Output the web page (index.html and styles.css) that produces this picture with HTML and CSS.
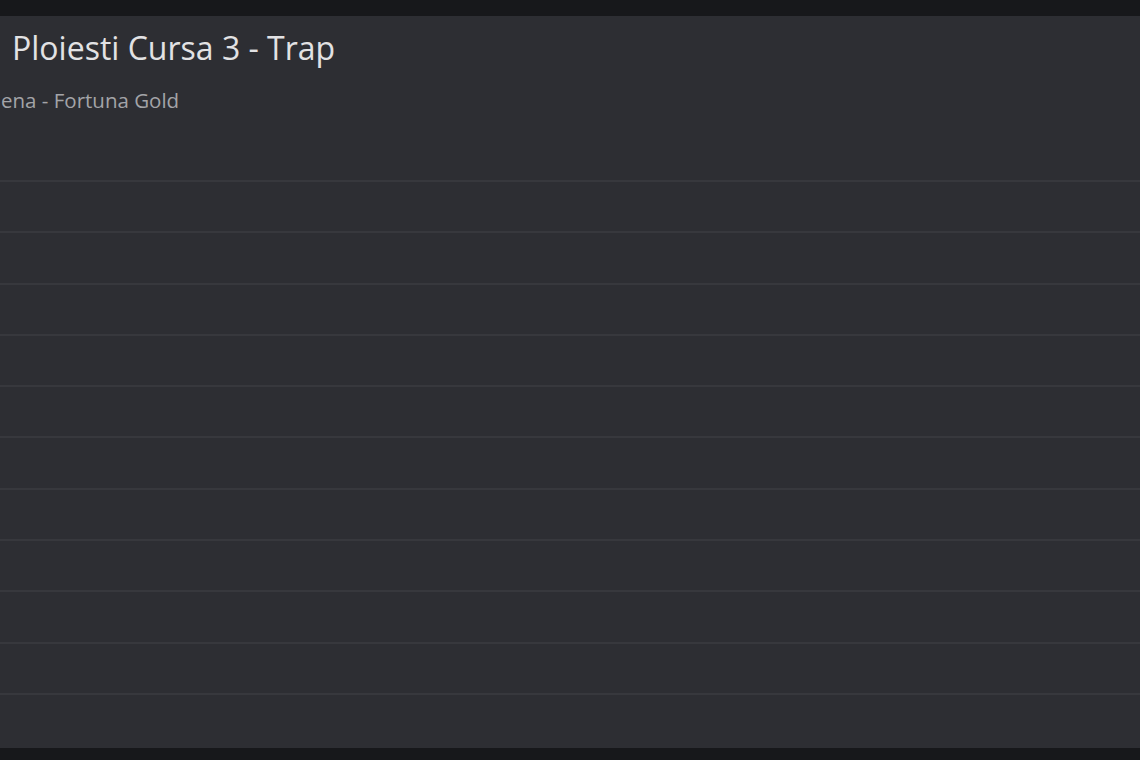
FILE: index.html
```html
<!DOCTYPE html>
<html>
<head>
<meta charset="utf-8">
<link rel="stylesheet" href="styles.css">
</head>
<body>
<div class="topbar"></div>
<main class="panel">
  <header class="head">
    <h1 class="title">Ploiesti Cursa 3 - Trap</h1>
    <p class="sub">ena - Fortuna Gold</p>
  </header>
  <div class="rows">
    <div class="row"></div>
    <div class="row"></div>
    <div class="row"></div>
    <div class="row"></div>
    <div class="row"></div>
    <div class="row"></div>
    <div class="row"></div>
    <div class="row"></div>
    <div class="row"></div>
    <div class="row"></div>
    <div class="row last"></div>
  </div>
</main>
<div class="bottombar"></div>
</body>
</html>
```

FILE: styles.css
```css
html, body {
  margin: 0;
  padding: 0;
  width: 1140px;
  height: 760px;
  overflow: hidden;
  background: #17181b;
  font-family: "Open Sans", "Noto Sans", sans-serif;
}
.topbar {
  height: 16px;
  background: #17181b;
}
.panel {
  height: 732px;
  background: #2d2e33;
  display: flex;
  flex-direction: column;
}
.head {
  height: 164px;
  padding-top: 12px;
  box-sizing: border-box;
}
.title {
  margin: 0 0 0 12px;
  font-size: 32px;
  line-height: 40px;
  font-weight: 400;
  color: #e2e2e4;
}
.sub {
  margin: 19px 0 0 1px;
  font-size: 20.5px;
  line-height: 26px;
  color: #a3a4a8;
}
.rows {
  flex: 1;
  display: flex;
  flex-direction: column;
}
.row {
  height: 49.3px;
  border-top: 2px solid #37383d;
}
.row.last {
  flex: 1;
}
.bottombar {
  height: 12px;
  background: #17181b;
}
```
